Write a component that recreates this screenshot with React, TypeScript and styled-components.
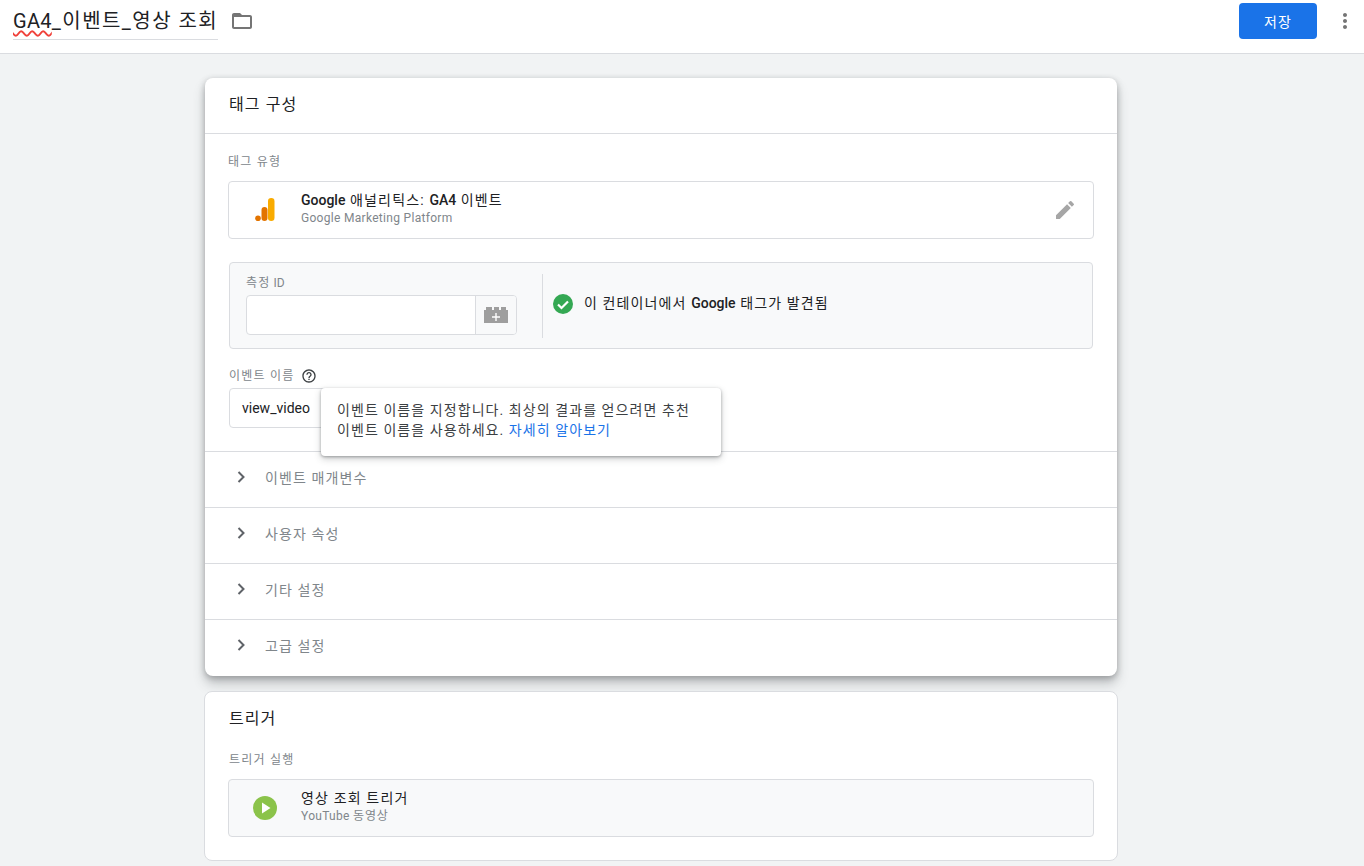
import styled, {createGlobalStyle} from "styled-components";

const GlobalStyle = createGlobalStyle`
    html, body {
        margin: 0;
        padding: 0;
        height: 100%;
        overflow: hidden;
        background-color: #f1f3f4;
        font-family: Roboto, "Noto Sans CJK KR", sans-serif;
        color: #202124;
    }
    * {
        box-sizing: border-box;
    }
`

const Latin = styled.span`
    letter-spacing: 0;
`

const Page = styled.div`
    height: 866px;
    display: flex;
    flex-direction: column;
`

const TopBar = styled.header`
    height: 54px;
    flex: none;
    background-color: #fff;
    border-bottom: 1px solid #dadce0;
    display: flex;
    align-items: flex-start;
    padding: 3px 0 0 13px;
`

const NameField = styled.div`
    width: 205px;
    height: 37px;
    border-bottom: 1px solid #dadce0;
    font-size: 20px;
    line-height: 36px;
    white-space: nowrap;
    color: #202124;
    letter-spacing: 1.45px;

    ${Latin} {
        letter-spacing: 0.3px;
        text-decoration: underline wavy #f0413a 1.5px;
        text-underline-offset: 2px;
    }
`

const FolderButton = styled.div`
    margin: 6px 0 0 12px;
    width: 24px;
    height: 24px;
    color: #757575;
`

const Spacer = styled.div`
    flex: 1;
`

const SaveButton = styled.button`
    width: 78px;
    height: 36px;
    border: none;
    border-radius: 4px;
    background-color: #1a73e8;
    color: #fff;
    font-family: inherit;
    font-size: 14px;
    letter-spacing: 1px;
    padding: 0;
`

const MoreButton = styled.div`
    width: 24px;
    height: 24px;
    margin: 6px 7px 0 16px;
    color: #757575;
`

const Content = styled.main`
    flex: 1;
    display: flex;
    flex-direction: column;
    align-items: center;
    padding: 24px 42px 0 0;
    gap: 15px;
`

const ActiveCard = styled.section`
    width: 912px;
    height: 598px;
    flex: none;
    background-color: #fff;
    border-radius: 8px;
    box-shadow: 0 8px 12px rgba(60, 64, 67, 0.25), 0 2px 6px rgba(60, 64, 67, 0.35);
    display: flex;
    flex-direction: column;
`

const CardHeader = styled.h2`
    margin: 0;
    height: 56px;
    flex: none;
    padding: 0 24px;
    border-bottom: 1px solid #dadce0;
    font-size: 16px;
    font-weight: 400;
    line-height: 54px;
    letter-spacing: 1.1px;
`

const CardBody = styled.div`
    padding: 20px 23px 0 23px;
    position: relative;
`

const FieldLabel = styled.div`
    font-size: 12px;
    line-height: 16px;
    color: #80868b;
    display: flex;
    align-items: center;
    letter-spacing: 1.2px;
`

const TypeBox = styled.div<{$tinted?: boolean}>`
    height: 58px;
    margin-top: 11px;
    border: 1px solid #dadce0;
    border-radius: 4px;
    background-color: ${p => p.$tinted ? "#f8f9fa" : "#fff"};
    display: flex;
    align-items: center;
`

const TypeIcon = styled.div`
    width: 72px;
    flex: none;
    display: flex;
    justify-content: center;
`

const TypeText = styled.div`
    flex: 1;
    margin-top: -4px;
`

const TypeTitle = styled.div`
    font-size: 14px;
    line-height: 20px;
    color: #202124;
    letter-spacing: 1.15px;

    b {
        font-weight: 500;
        letter-spacing: 0;
    }
`

const TypeSub = styled.div`
    font-size: 12px;
    line-height: 16px;
    color: #80868b;
    letter-spacing: 0.3px;
`

const SubKorean = styled.span`
    letter-spacing: 0.9px;
`

const EditIcon = styled.div`
    width: 24px;
    height: 24px;
    margin-right: 16px;
    color: #a6a6a6;
`

const MeasureBox = styled.div`
    height: 87px;
    margin: 23px 1px 0;
    border: 1px solid #dadce0;
    border-radius: 4px;
    background-color: #f8f9fa;
    display: flex;
    padding: 11px 0 10px 16px;
`

const MeasureField = styled.div`
    width: 297px;
    flex: none;
    border-right: 1px solid #dadce0;
    padding-top: 1px;
`

const VarInput = styled.div`
    width: 271px;
    height: 40px;
    margin-top: 4px;
    border: 1px solid #dadce0;
    border-radius: 4px;
    background-color: #fff;
    display: flex;
    justify-content: flex-end;
`

const VarButton = styled.div`
    width: 41px;
    border-left: 1px solid #dadce0;
    border-radius: 0 3px 3px 0;
    background-color: #f8f9fa;
    display: flex;
    align-items: center;
    justify-content: center;
`

const FoundMessage = styled.div`
    display: flex;
    align-items: flex-start;
    padding: 20px 0 0 10px;
    gap: 11px;
    font-size: 14px;
    line-height: 20px;
    color: #202124;
    letter-spacing: 1.12px;

    b {
        font-weight: 500;
        letter-spacing: 0;
    }
`

const FoundText = styled.div`
    margin-top: -1px;
`

const EventSection = styled.div`
    margin: 19px 0 0 1px;
    position: relative;
`

const HelpIcon = styled.span`
    width: 16px;
    height: 16px;
    margin-left: 7px;
    color: #3c4043;
    display: inline-flex;
`

const EventInput = styled.div`
    width: 300px;
    height: 40px;
    margin-top: 4px;
    border: 1px solid #dadce0;
    border-radius: 4px 0 0 4px;
    padding-left: 12px;
    font-size: 14px;
    line-height: 38px;
    color: #202124;
`

const Tooltip = styled.div`
    position: absolute;
    left: 92px;
    top: 20px;
    width: 400px;
    height: 68px;
    padding: 12px 16px;
    background-color: #fff;
    border-radius: 4px;
    box-shadow: 0 1px 3px rgba(60, 64, 67, 0.4), 0 3px 7px rgba(60, 64, 67, 0.25);
    font-size: 14px;
    line-height: 20px;
    color: #3c4043;
    letter-spacing: 1.07px;
    white-space: nowrap;
    z-index: 2;

    a {
        color: #1a73e8;
        text-decoration: none;
    }
`

const Rows = styled.div`
    margin-top: 23px;
`

const ExpandRow = styled.div`
    height: 56px;
    border-top: 1px solid #dadce0;
    display: flex;
    align-items: center;
    padding: 0 0 5px 24px;
    font-size: 14px;
    color: #80868b;
    letter-spacing: 1.1px;

    svg {
        width: 24px;
        height: 24px;
        margin-right: 12px;
        color: #5f6368;
    }
`

const TriggerCard = styled.section`
    width: 914px;
    height: 170px;
    flex: none;
    background-color: #fff;
    border: 1px solid #dadce0;
    border-radius: 8px;
    padding: 0 23px;
`

const TriggerTitle = styled.h2`
    margin: 0;
    padding-left: 1px;
    font-size: 16px;
    font-weight: 400;
    line-height: 54px;
    color: #202124;
    letter-spacing: 1px;
`

const TriggerLabel = styled(FieldLabel)`
    margin-top: 6px;
    padding-left: 1px;
`

const TriggerIcon = styled(TypeIcon)`
    padding-right: 1px;
`

const Chevron = () => (
    <svg viewBox="0 0 24 24" fill="none" stroke="currentColor" strokeWidth="2">
        <path d="M9.5 7l5 5-5 5"/>
    </svg>
)

const rows = ["이벤트 매개변수", "사용자 속성", "기타 설정", "고급 설정"]

export default function App() {
    return (
        <Page>
            <GlobalStyle/>
            <TopBar>
                <NameField><Latin>GA4</Latin>_이벤트_영상 조회</NameField>
                <FolderButton>
                    <svg viewBox="0 0 24 24" width="24" height="24" fill="currentColor">
                        <path d="M20 6h-8l-2-2H4c-1.1 0-2 .9-2 2v12c0 1.1.9 2 2 2h16c1.1 0 2-.9 2-2V8c0-1.1-.9-2-2-2zm0 12H4V8h16v10z"/>
                    </svg>
                </FolderButton>
                <Spacer/>
                <SaveButton>저장</SaveButton>
                <MoreButton>
                    <svg viewBox="0 0 24 24" width="24" height="24" fill="currentColor">
                        <path d="M12 8c1.1 0 2-.9 2-2s-.9-2-2-2-2 .9-2 2 .9 2 2 2zm0 2c-1.1 0-2 .9-2 2s.9 2 2 2 2-.9 2-2-.9-2-2-2zm0 6c-1.1 0-2 .9-2 2s.9 2 2 2 2-.9 2-2-.9-2-2-2z"/>
                    </svg>
                </MoreButton>
            </TopBar>
            <Content>
                <ActiveCard>
                    <CardHeader>태그 구성</CardHeader>
                    <CardBody>
                        <FieldLabel>태그 유형</FieldLabel>
                        <TypeBox>
                            <TypeIcon>
                                <svg width="24" height="24" viewBox="0 0 24 24">
                                    <rect x="15" y="0" width="6.5" height="23" rx="3.2" fill="#f9ab00"/>
                                    <rect x="8.5" y="9" width="6" height="14" rx="3" fill="#e37400"/>
                                    <circle cx="5" cy="20.2" r="2.8" fill="#e37400"/>
                                </svg>
                            </TypeIcon>
                            <TypeText>
                                <TypeTitle><b>Google</b> 애널리틱스: <b>GA4</b> 이벤트</TypeTitle>
                                <TypeSub>Google Marketing Platform</TypeSub>
                            </TypeText>
                            <EditIcon>
                                <svg viewBox="0 0 24 24" width="24" height="24" fill="currentColor">
                                    <path d="M3 17.25V21h3.75L17.81 9.94l-3.75-3.75L3 17.25zM20.71 7.04a1 1 0 0 0 0-1.41l-2.34-2.34a1 1 0 0 0-1.41 0l-1.83 1.83 3.75 3.75 1.83-1.83z"/>
                                </svg>
                            </EditIcon>
                        </TypeBox>
                        <MeasureBox>
                            <MeasureField>
                                <FieldLabel>측정 <Latin>&nbsp;ID</Latin></FieldLabel>
                                <VarInput>
                                    <VarButton>
                                        <svg width="24" height="16" viewBox="0 0 24 16">
                                            <path d="M0 3h2V0h6v3h2V0h5v3h2V0h5v3h2v13H0z" fill="#9e9e9e"/>
                                            <path d="M12 6v8M8 10h8" stroke="#fff" strokeWidth="1.4"/>
                                        </svg>
                                    </VarButton>
                                </VarInput>
                            </MeasureField>
                            <FoundMessage>
                                <svg width="20" height="20" viewBox="0 0 20 20">
                                    <circle cx="10" cy="10" r="10" fill="#34a853"/>
                                    <path d="M5 10.5l3.5 3.5L15 7.5" fill="none" stroke="#fff" strokeWidth="2.2"/>
                                </svg>
                                <FoundText>이 컨테이너에서 <b>Google</b> 태그가 발견됨</FoundText>
                            </FoundMessage>
                        </MeasureBox>
                        <EventSection>
                            <FieldLabel>
                                이벤트 이름
                                <HelpIcon>
                                    <svg viewBox="0 0 24 24" width="16" height="16" fill="currentColor">
                                        <path d="M11 18h2v-2h-2v2zm1-16C6.48 2 2 6.48 2 12s4.48 10 10 10 10-4.48 10-10S17.52 2 12 2zm0 18c-4.41 0-8-3.59-8-8s3.59-8 8-8 8 3.59 8 8-3.59 8-8 8zm0-14c-2.21 0-4 1.79-4 4h2c0-1.1.9-2 2-2s2 .9 2 2c0 2-3 1.75-3 5h2c0-2.25 3-2.5 3-5 0-2.21-1.79-4-4-4z"/>
                                    </svg>
                                </HelpIcon>
                            </FieldLabel>
                            <EventInput>view_video</EventInput>
                            <Tooltip>
                                이벤트 이름을 지정합니다. 최상의 결과를 얻으려면 추천<br/>
                                이벤트 이름을 사용하세요. <a href="#">자세히 알아보기</a>
                            </Tooltip>
                        </EventSection>
                    </CardBody>
                    <Rows>
                        {rows.map(r => (
                            <ExpandRow key={r}>
                                <Chevron/>
                                <span>{r}</span>
                            </ExpandRow>
                        ))}
                    </Rows>
                </ActiveCard>
                <TriggerCard>
                    <TriggerTitle>트리거</TriggerTitle>
                    <TriggerLabel>트리거 실행</TriggerLabel>
                    <TypeBox $tinted>
                        <TriggerIcon>
                            <svg width="24" height="24" viewBox="0 0 24 24">
                                <circle cx="12" cy="12" r="12" fill="#8bc34a"/>
                                <path d="M9 6.5l8.5 5.5L9 17.5z" fill="#fff"/>
                            </svg>
                        </TriggerIcon>
                        <TypeText>
                            <TypeTitle>영상 조회 트리거</TypeTitle>
                            <TypeSub>YouTube <SubKorean>동영상</SubKorean></TypeSub>
                        </TypeText>
                    </TypeBox>
                </TriggerCard>
            </Content>
        </Page>
    )
}
